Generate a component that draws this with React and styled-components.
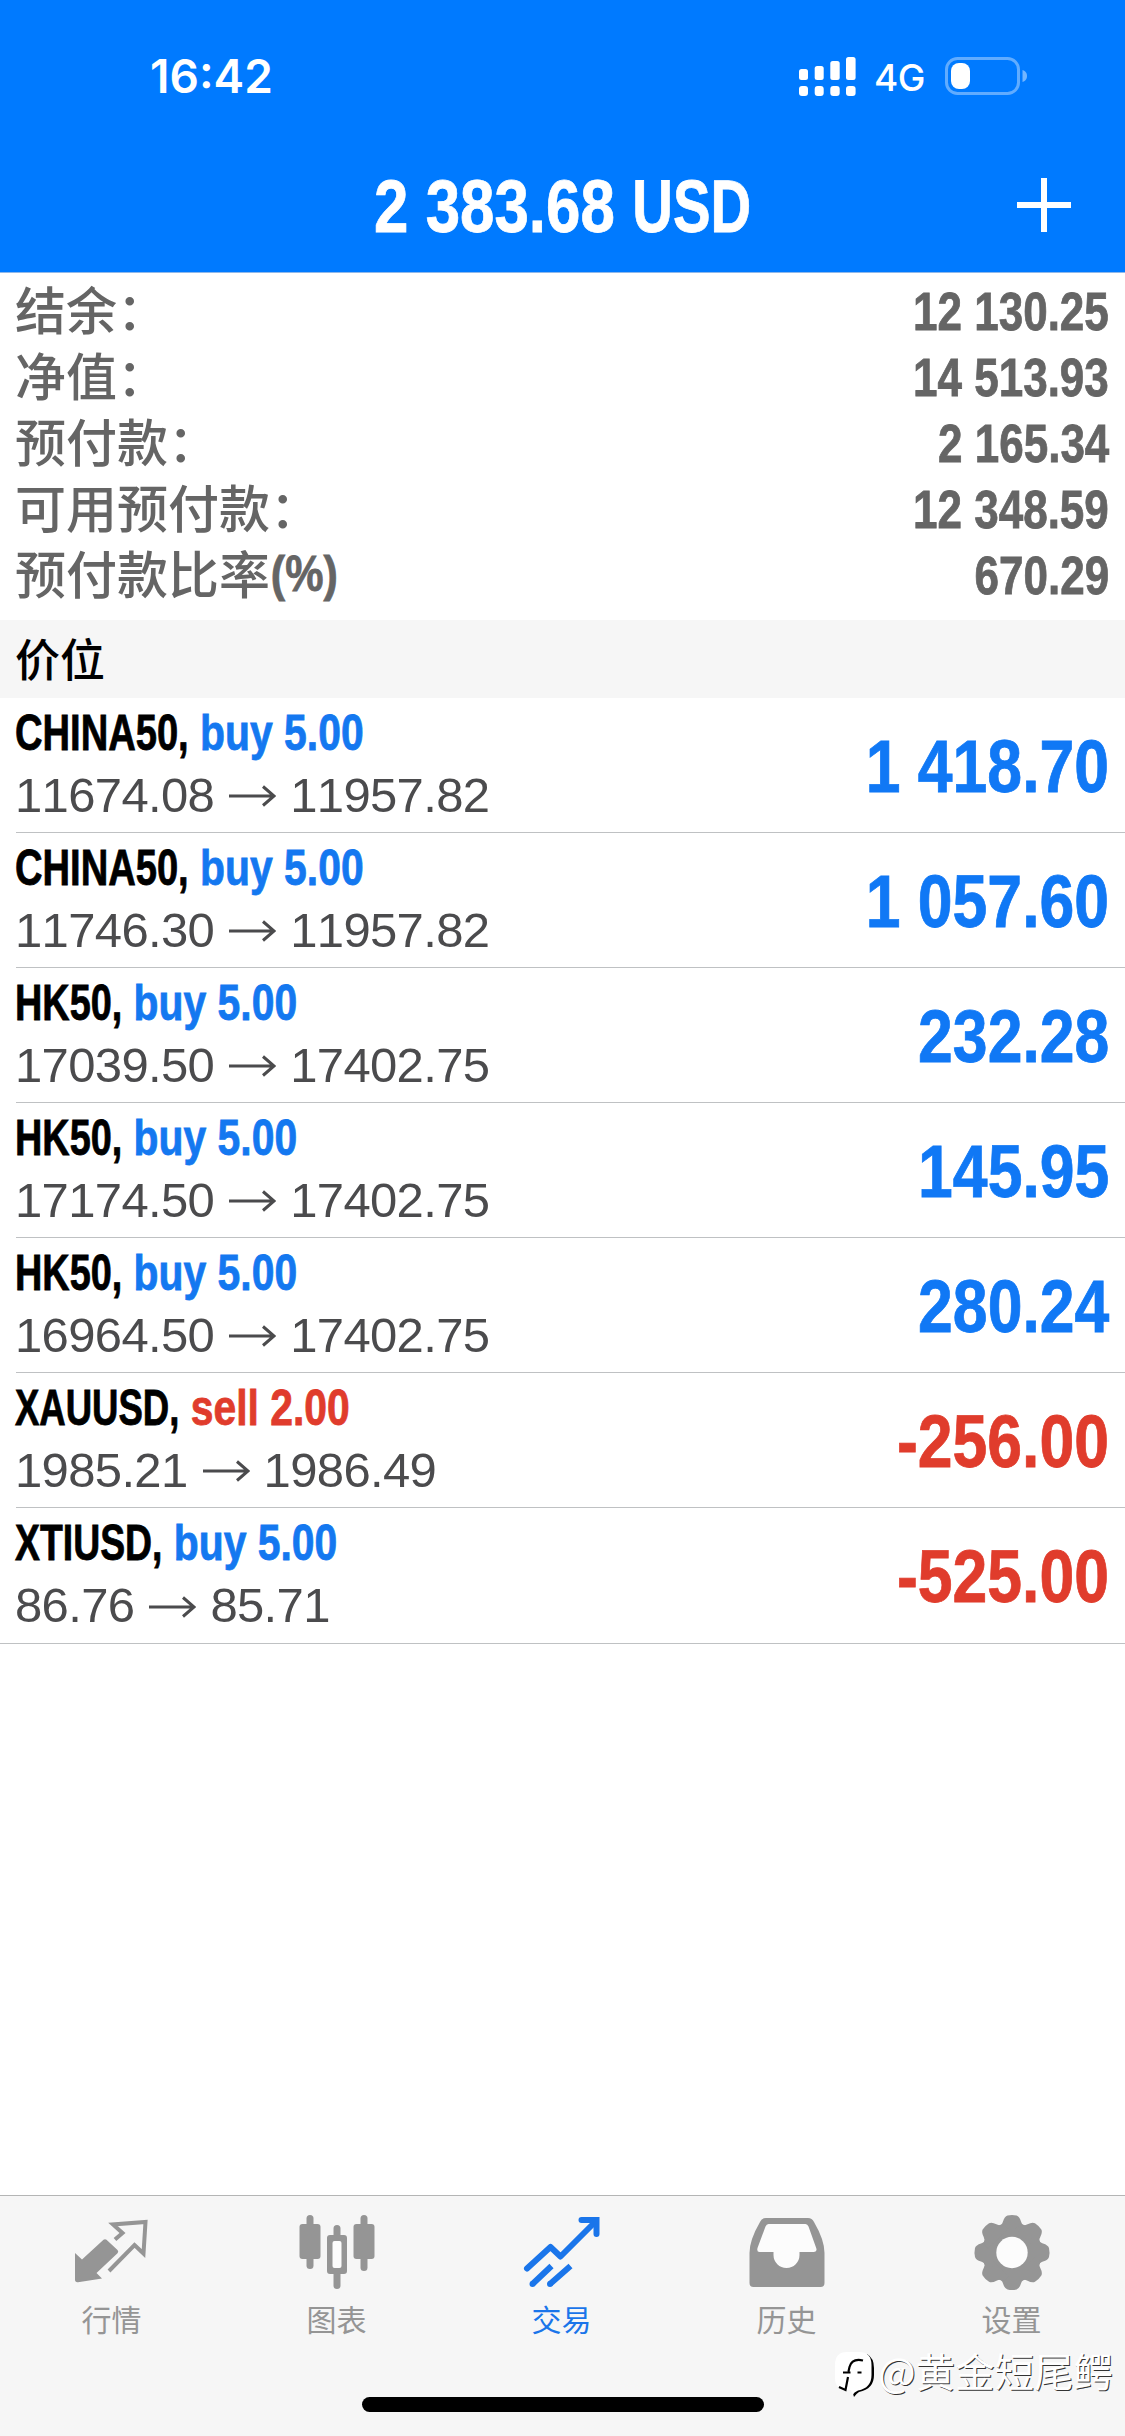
import React from 'react'
import styled, { createGlobalStyle } from 'styled-components'

const summary = [
    { label: '结余：', value: '12 130.25' },
    { label: '净值：', value: '14 513.93' },
    { label: '预付款：', value: '2 165.34' },
    { label: '可用预付款：', value: '12 348.59' },
    { label: '预付款比率', unit: '(%)', value: '670.29' },
]

// squeeze narrows the capitals of a symbol, trim is the width this frees
const positions = [
    { symbol: 'CHINA50', squeeze: 0.933, trim: 15.2, side: 'buy', lots: '5.00', open: '11674.08', current: '11957.82', profit: '1 418.70' },
    { symbol: 'CHINA50', squeeze: 0.933, trim: 15.2, side: 'buy', lots: '5.00', open: '11746.30', current: '11957.82', profit: '1 057.60' },
    { symbol: 'HK50', squeeze: 0.926, trim: 10.5, side: 'buy', lots: '5.00', open: '17039.50', current: '17402.75', profit: '232.28' },
    { symbol: 'HK50', squeeze: 0.926, trim: 10.5, side: 'buy', lots: '5.00', open: '17174.50', current: '17402.75', profit: '145.95' },
    { symbol: 'HK50', squeeze: 0.926, trim: 10.5, side: 'buy', lots: '5.00', open: '16964.50', current: '17402.75', profit: '280.24' },
    { symbol: 'XAUUSD', squeeze: 0.894, trim: 23.8, side: 'sell', lots: '2.00', open: '1985.21', current: '1986.49', profit: '-256.00' },
    { symbol: 'XTIUSD', squeeze: 0.915, trim: 16.8, side: 'buy', lots: '5.00', open: '86.76', current: '85.71', profit: '-525.00' },
]

const tabs = [
    { name: '行情', Icon: QuotesIcon },
    { name: '图表', Icon: ChartIcon },
    { name: '交易', Icon: TradeIcon, active: true },
    { name: '历史', Icon: HistoryIcon },
    { name: '设置', Icon: SettingsIcon },
]

export default function App() {
    return (
        <Screen>
            <GlobalStyle />
            <Header>
                <StatusBar>
                    <Clock>16:42</Clock>
                    <StatusIcons>
                        <SignalIcon />
                        <Network>4G</Network>
                        <BatteryIcon />
                    </StatusIcons>
                </StatusBar>
                <TitleBar>
                    <Title>2 383.68 <Squeezed $squeeze={0.91} $trim={14}>USD</Squeezed></Title>
                    <AddButton aria-label="add">
                        <svg width="54" height="54" viewBox="0 0 54 54">
                            <path d="M27 0V54M0 27H54" stroke="#fff" strokeWidth="6" />
                        </svg>
                    </AddButton>
                </TitleBar>
            </Header>

            <Summary>
                {summary.map(({ label, unit, value }) => (
                    <SummaryRow key={label}>
                        <SummaryLabel>{label}{unit && <Unit>{unit}</Unit>}</SummaryLabel>
                        <SummaryValue>{value}</SummaryValue>
                    </SummaryRow>
                ))}
            </Summary>

            <SectionHead>价位</SectionHead>

            <List>
                {positions.map((p, i) => (
                    <Position key={i}>
                        <div>
                            <Deal>
                                <Squeezed $squeeze={p.squeeze} $trim={p.trim}>{p.symbol},</Squeezed> <Side $side={p.side}>{p.side} {p.lots}</Side>
                            </Deal>
                            <Prices>
                                <Price>{p.open}</Price>
                                <ArrowIcon />
                                <Price>{p.current}</Price>
                            </Prices>
                        </div>
                        <Profit $loss={p.profit.startsWith('-')}>{p.profit}</Profit>
                    </Position>
                ))}
            </List>

            <TabBar>
                {tabs.map(({ name, Icon, active }) => (
                    <Tab key={name} $active={active}>
                        <Icon />
                        <TabName>{name}</TabName>
                    </Tab>
                ))}
                <HomeIndicator />
                <Watermark>
                    <WatermarkLogo />
                    <span>@黄金短尾鳄</span>
                </Watermark>
            </TabBar>
        </Screen>
    )
}

function SignalIcon() {
    return (
        <svg width="57" height="39" viewBox="0 0 57 39" fill="#fff">
            <rect x="0" y="12" width="9" height="11" rx="2.5" />
            <rect x="15.7" y="9" width="9" height="14" rx="2.5" />
            <rect x="31.3" y="4" width="9.4" height="19" rx="2.5" />
            <rect x="47" y="0" width="9.6" height="23" rx="2.5" />
            <rect x="0" y="29" width="9" height="10" rx="3" />
            <rect x="15.7" y="29" width="9" height="10" rx="3" />
            <rect x="31.3" y="29" width="9.4" height="10" rx="3" />
            <rect x="47" y="29" width="9.6" height="10" rx="3" />
        </svg>
    )
}

function BatteryIcon() {
    return (
        <svg width="83" height="38" viewBox="0 0 83 38">
            <rect x="1.5" y="1.5" width="72" height="35" rx="11" fill="none" stroke="#fff" strokeOpacity="0.38" strokeWidth="3" />
            <path d="M77.5 13c3.4 1 4.500 3.400 4.500 6s-1.100 5-4.500 6z" fill="#fff" fillOpacity="0.45" />
            <rect x="6" y="6" width="19" height="26" rx="8" fill="#fff" />
        </svg>
    )
}

function ArrowIcon() {
    return (
        <Arrow viewBox="0 0 47 22">
            <path d="M0 11H45M34 1.500L45 11L34 20.500" fill="none" stroke="#4b4b4d" strokeWidth="3" />
        </Arrow>
    )
}

function QuotesIcon() {
    return (
        <TabIcon viewBox="-1 0 78 78">
            <path
                d="M41 24.500L48.500 18L39 9.500L71.500 7L69.500 38.500L60.500 30L35 56"
                fill="none" stroke="currentColor" strokeWidth="4" strokeLinejoin="miter"
            />
            <path d="M29.500 24.800q1.500-1.300 3 0L43.500 35q1.500 1.600 0 3.200L22.500 58L28 63.500L4 67.200q-3 .3-3-2.700V38L8 44.500z" fill="currentColor" />
        </TabIcon>
    )
}

function ChartIcon() {
    return (
        <TabIcon viewBox="0 0 78 78" fill="currentColor">
            <rect x="8.500" y="0" width="7" height="54" rx="3.500" />
            <rect x="1.500" y="9" width="21" height="35" rx="3" />
            <rect x="62.500" y="0" width="7" height="56" rx="3.500" />
            <rect x="55.500" y="9" width="21" height="35" rx="3" />
            <path d="M35.500 20v-6.500a3.500 3.500 0 0 1 7 0V20h3.500a3 3 0 0 1 3 3v33a3 3 0 0 1-3 3h-3.500v11.500a3.500 3.500 0 0 1-7 0V59h-3.500a3 3 0 0 1-3-3V23a3 3 0 0 1 3-3z" />
            <rect x="34.500" y="26" width="9" height="27" rx="2" fill="#fcfcfc" />
        </TabIcon>
    )
}

function TradeIcon() {
    return (
        <TabIcon viewBox="0 0 78 78" fill="none" stroke="currentColor" strokeWidth="6">
            <path d="M4 53.500L27.500 32L37.500 41.500L72 7" strokeLinejoin="round" strokeLinecap="round" />
            <path d="M58.500 5H73.500V19" strokeLinecap="round" />
            <path d="M9.500 69L28.500 51M27 69L47.500 51" />
            <path d="M9.500 69h.01M27 69h.01" strokeLinecap="round" />
        </TabIcon>
    )
}

function HistoryIcon() {
    return (
        <TabIcon viewBox="0 0 78 78">
            <path
                fill="currentColor"
                d="M18 3H60q4 0 6 4Q76.500 25 76.500 38V68q0 4-4 4H5.500q-4 0-4-4V38Q1.500 25 12 7q2-4 6-4z"
            />
            <path d="M20.500 9q-2 0-3 2.500L9.500 33q-1 4 2 4H25.500v3a13 13 0 0 0 26 0v-3H66q3.500 0 2.200-4L60.500 11.500q-1-2.500-3-2.500z" fill="#fcfcfc" />
        </TabIcon>
    )
}

function SettingsIcon() {
    return (
        <TabIcon viewBox="0 0 78 78" fill="currentColor">
            <circle cx="39" cy="37.500" r="30" />
            {[0, 45, 90, 135, 180, 225, 270, 315].map((deg) => (
                <path
                    key={deg}
                    transform={`rotate(${deg} 39 37.500)`}
                    d="M25 12Q29 10 30 6.500Q31.500 1.500 34.500 .5Q39-.5 43.500 .5Q46.500 1.500 48 6.500Q49 10 53 12V18H25z"
                />
            ))}
            <circle cx="39" cy="37.500" r="15.700" fill="#fcfcfc" />
        </TabIcon>
    )
}

function WatermarkLogo() {
    return (
        <svg width="42" height="46" viewBox="0 0 42 46">
            <path d="M33 3Q40 7 40 17V24Q40 38 25 41Q22 43 20 46L18.500 41L30 34z" fill="#000" />
            <path d="M13 1H25Q37.500 1 37.500 14V24Q37.500 37 24 39.500Q20 41 18.500 44L17 39H13Q1 39 1 27V14Q1 1 13 1z" fill="#fff" />
            <path d="M29 9.500Q18 7 15.500 16L14.500 20.500M9 21.500H16.500M14 26L11.500 39L5 36M23.500 21.500h4" fill="none" stroke="#000" strokeWidth="2.200" />
        </svg>
    )
}

const GlobalStyle = createGlobalStyle`
body {
    margin: 0;
    background: #fff;
}

* {
    box-sizing: border-box;
}
`

const Screen = styled.div`
    width: 1125px;
    height: 2436px;
    overflow: hidden;
    display: flex;
    flex-direction: column;
    background: #fff;
    font-family: "Liberation Sans", "Noto Sans CJK SC", sans-serif;
    white-space: nowrap;
`

const Header = styled.header`
    height: 273px;
    background: #007aff;
    border-bottom: 1px solid #8fb8ea;
    color: #fff;
`

const StatusBar = styled.div`
    height: 138px;
    padding: 14px 97px 0 150px;
    display: flex;
    align-items: center;
    justify-content: space-between;
    font-family: Inter, "Liberation Sans", sans-serif;
`

const Clock = styled.div`
    font-size: 46px;
    font-weight: 600;
`

const StatusIcons = styled.div`
    display: flex;
    align-items: center;
`

const Network = styled.div`
    width: 52px;
    margin: 2px 19px 0 18px;
    font-size: 37px;
    font-weight: 500;
    letter-spacing: -0.5px;
`

const TitleBar = styled.div`
    height: 134px;
    padding: 0 54px;
    display: grid;
    grid-template-columns: 54px 1fr 54px;
    align-items: center;
`

/* condensed bold face used for amounts and symbols */
const Condensed = styled.div`
    font-weight: bold;
    font-kerning: none;
    transform: scaleX(0.83);
    -webkit-text-stroke: 0.8px currentColor;
`

const Squeezed = styled.span`
    display: inline-block;
    margin-right: -${({ $trim }) => $trim}px;
    transform: scaleX(${({ $squeeze }) => $squeeze});
    transform-origin: left;
`

const Title = styled(Condensed)`
    grid-column: 2;
    padding-top: 2px;
    text-align: center;
    font-size: 74px;
    transform: scaleX(0.836);
`

const AddButton = styled.button`
    padding: 0;
    border: 0;
    background: none;
    display: flex;
`

const Summary = styled.section`
    height: 347px;
    padding: 5px 16px 0 15px;
    color: #656565;
`

const SummaryRow = styled.div`
    height: 66px;
    display: flex;
    justify-content: space-between;
`

const SummaryLabel = styled.div`
    display: flex;
    font-family: "Noto Sans CJK SC", sans-serif;
    font-size: 51px;
    font-weight: 500;
    line-height: 60px;
`

const Unit = styled(Condensed)`
    padding: 2px 0 0 1px;
    font-family: "Liberation Sans", sans-serif;
    font-size: 50px;
    transform: scaleX(0.86);
    transform-origin: left;
`

const SummaryValue = styled(Condensed)`
    font-size: 53px;
    line-height: 67px;
    transform-origin: right;
`

const SectionHead = styled.div`
    height: 78px;
    padding-left: 15px;
    background: #f6f6f6;
    color: #000;
    font-family: "Noto Sans CJK SC", sans-serif;
    font-size: 45px;
    font-weight: 500;
    line-height: 76px;
`

const List = styled.section`
    flex: 1;
`

const Position = styled.div`
    height: 135px;
    margin-left: 16px;
    padding-right: 16px;
    display: flex;
    justify-content: space-between;
    align-items: center;
    border-bottom: 1px solid #bfc1c3;

    &:last-child {
        height: 136px;
        margin-left: 0;
        padding-left: 16px;
    }
`

const Deal = styled(Condensed)`
    margin-left: -1px;
    font-size: 50px;
    line-height: 63px;
    color: #000;
    transform: scaleX(0.817);
    transform-origin: left;
`

const Side = styled.span`
    color: ${({ $side }) => ($side === 'buy' ? '#1478f0' : '#e03c2c')};
`

const Prices = styled.div`
    margin-left: -1px;
    display: flex;
    align-items: center;
    height: 61px;
    padding-bottom: 1px;
    margin-bottom: 3px;
    color: #4b4b4d;
`

const Price = styled.span`
    font-size: 49px;
    letter-spacing: -0.65px;
    font-kerning: none;
`

const Arrow = styled.svg`
    width: 47px;
    height: 22px;
    margin: 3px 14px 0 15px;
`

const Profit = styled(Condensed)`
    padding-top: 2px;
    font-size: 74px;
    transform: scaleX(0.845);
    transform-origin: right;
    color: ${({ $loss }) => ($loss ? '#e03c2c' : '#1078f5')};
`

const TabBar = styled.nav`
    position: relative;
    height: 241px;
    display: grid;
    grid-template-columns: repeat(5, 1fr);
    background: #f6f6f6;
    border-top: 1px solid #b4b5b5;
`

const Tab = styled.div`
    padding: 19px 2px 0 0;
    display: flex;
    flex-direction: column;
    align-items: center;
    color: ${({ $active }) => ($active ? '#1a75ea' : '#959595')};
`

const TabIcon = styled.svg`
    width: 78px;
    height: 78px;
    overflow: visible;
`

const TabName = styled.div`
    margin-top: 4px;
    font-family: "Noto Sans CJK SC", sans-serif;
    font-size: 30px;
    line-height: 42px;
`

const HomeIndicator = styled.div`
    position: absolute;
    left: 362px;
    bottom: 24px;
    width: 402px;
    height: 15px;
    border-radius: 8px;
    background: #000;
`

const Watermark = styled.div`
    position: absolute;
    right: 12px;
    bottom: 36px;
    display: flex;
    align-items: center;
    gap: 2px;
    color: #fff;
    font-family: "Noto Sans CJK SC", sans-serif;
    font-size: 39.5px;
    line-height: 46px;
    text-shadow: 1px 1px 0 #333;

    span {
        padding-bottom: 7px;
    }
`
